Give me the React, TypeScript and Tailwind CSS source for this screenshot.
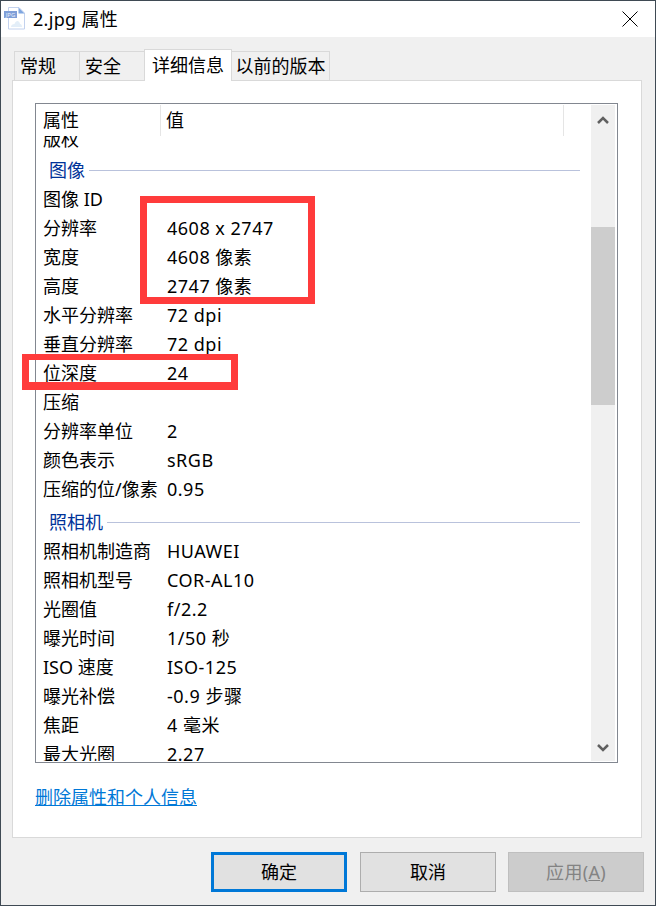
import type { ReactNode } from 'react';

const fontStack = "font-['Segoe_UI','Noto_Sans','Noto_Sans_CJK_SC',sans-serif]";

const topRows = [
  ['图像 ID', ''],
  ['分辨率', '4608 x 2747'],
  ['宽度', '4608 像素'],
  ['高度', '2747 像素'],
  ['水平分辨率', '72 dpi'],
  ['垂直分辨率', '72 dpi'],
  ['位深度', '24'],
  ['压缩', ''],
  ['分辨率单位', '2'],
  ['颜色表示', 'sRGB'],
  ['压缩的位/像素', '0.95'],
];

const cameraRows = [
  ['照相机制造商', 'HUAWEI'],
  ['照相机型号', 'COR-AL10'],
  ['光圈值', 'f/2.2'],
  ['曝光时间', '1/50 秒'],
  ['ISO 速度', 'ISO-125'],
  ['曝光补偿', '-0.9 步骤'],
  ['焦距', '4 毫米'],
  ['最大光圈', '2.27'],
];

function Row({ label, value }: { label: string; value: string }) {
  return (
    <div className="flex h-[29px] shrink-0 items-center pl-[7px] text-[18px] leading-[29px] text-black">
      <span className="w-[124px] shrink-0 whitespace-nowrap">{label}</span>
      <span className="whitespace-nowrap tracking-[0.5px]">{value}</span>
    </div>
  );
}

function Section({ title, className }: { title: string; className?: string }) {
  return (
    <div className={`flex h-[29px] shrink-0 items-center pl-[13px] pr-[11px] text-[18px] text-[#003399] ${className ?? ''}`}>
      <span className="whitespace-nowrap">{title}</span>
      <div className="ml-[4px] h-px flex-1 bg-[#b9c2dc]" />
    </div>
  );
}

function Tab({ children, active, className }: { children: ReactNode; active?: boolean; className: string }) {
  if (active) {
    return (
      <div className={`relative z-10 -mb-px flex h-[32px] items-center justify-center border border-b-0 border-[#d9d9d9] bg-white text-[18px] text-black ${className}`}>
        {children}
      </div>
    );
  }
  return (
    <div className={`flex h-[29px] items-center border border-b-0 border-[#d9d9d9] bg-[#f0f0f0] pt-px text-[18px] text-black ${className}`}>
      {children}
    </div>
  );
}

function FileIcon() {
  return (
    <svg width="24" height="24" viewBox="0 0 24 24" className="ml-[3px] shrink-0">
      <path d="M4.500.5h10.500l5.500 5.500v16h-16z" fill="#ffffff" stroke="#c3d2ee" />
      <path d="M14.500.5v6h6z" fill="#7fa6e0" />
      <rect x="0" y="4" width="13" height="7" fill="#7f9fd8" />
      <text x="6.500" y="10" textAnchor="middle" fontSize="6" fill="#e6eefa">JPG</text>
      <path d="M7 20c0-2 1.500-3 3.500-3 .5-2 2-3 3-3s2.500 1.500 2.500 3c1.500 0 2 1.500 2 3z" fill="#e3eef8" />
    </svg>
  );
}

function Chevron({ down }: { down?: boolean }) {
  return (
    <svg width="12" height="9" viewBox="0 0 12 9">
      <path d={down ? 'M1 2l5 5 5-5' : 'M1 7l5-5 5 5'} fill="none" stroke="#606060" strokeWidth="2.500" />
    </svg>
  );
}

export default function App() {
  return (
    <div className={`relative flex h-[906px] w-[656px] flex-col overflow-hidden border border-[#3f4a54] bg-[#f0f0f0] ${fontStack}`}>
      {/* title bar */}
      <div className="flex h-[36px] shrink-0 items-center bg-white">
        <FileIcon />
        <span className="ml-[5px] text-[18px] tracking-[0.3px] text-black">2.jpg 属性</span>
        <svg width="16" height="16" viewBox="0 0 16 16" className="mb-px ml-auto mr-[17px]">
          <path d="M.5.5l15 15M15.500.5l-15 15" stroke="#000000" strokeWidth="1" fill="none" />
        </svg>
      </div>

      {/* tabs */}
      <div className="mx-[11px] mt-[12px] flex h-[31px] items-end pl-[2px]">
        <Tab className="w-[66px] pl-[5px]">常规</Tab>
        <Tab className="-ml-px w-[66px] pl-[5px]">安全</Tab>
        <Tab active className="-ml-px w-[88px]">详细信息</Tab>
        <Tab className="-ml-px w-[99px] justify-center whitespace-nowrap">以前的版本</Tab>
      </div>

      {/* panel */}
      <div className="mx-[11px] flex h-[758px] w-[630px] flex-col border border-[#d9d9d9] bg-white pl-[22px] pt-[22px]">
        <div className="flex h-[660px] w-[583px] border border-[#828790] pb-px pr-[2px] pt-px">
          <div className="flex min-w-0 flex-1 flex-col">
            <div className="relative z-10 flex h-[31px] shrink-0 bg-white text-[18px] text-black">
              <div className="flex w-[125px] items-center border-r border-[#e5e5e5] pl-[7px]">属性</div>
              <div className="flex w-[403px] items-center border-r border-[#e5e5e5] pl-[5px]">值</div>
            </div>
            <div className="min-h-0 flex-1 overflow-hidden">
              <div className="-mt-[11px] flex flex-col">
                <Row label="版权" value="" />
                <Section title="图像" className="mt-[2px]" />
                {topRows.map(([label, value]) => (
                  <Row key={label} label={label} value={value} />
                ))}
                <Section title="照相机" className="mt-[4px]" />
                {cameraRows.map(([label, value]) => (
                  <Row key={label} label={label} value={value} />
                ))}
              </div>
            </div>
          </div>
          {/* scrollbar */}
          <div className="flex w-[24px] shrink-0 flex-col bg-[#f0f0f0]">
            <div className="flex h-[24px] items-center justify-center pt-[6px]"><Chevron /></div>
            <div className="mt-[98px] h-[178px] bg-[#cdcdcd]" />
            <div className="mt-auto flex h-[24px] items-center justify-center pb-[4px]"><Chevron down /></div>
          </div>
        </div>
        <div className="mt-[23px] text-[18px] leading-[22px] text-[#0078d7] underline">删除属性和个人信息</div>
      </div>

      {/* buttons */}
      <div className="mt-[14px] flex justify-end gap-[12px] pr-[11px]">
        <div className="mr-px flex h-[40px] w-[136px] items-center justify-center border-[3px] border-[#0078d7] bg-[#e1e1e1] text-[18px] text-black">确定</div>
        <div className="flex h-[40px] w-[136px] items-center justify-center border border-[#adadad] bg-[#e1e1e1] text-[18px] text-black">取消</div>
        <div className="flex h-[40px] w-[136px] items-center justify-center border border-[#bfbfbf] bg-[#cccccc] text-[18px] text-[#838383]">
          <span className="tracking-[0.3px]">应用(<span className="underline">A</span>)</span>
        </div>
      </div>

      {/* red annotation boxes */}
      <div className="absolute left-[139px] top-[195px] h-[108px] w-[175px] border-[7px] border-[#ff3b3b]" />
      <div className="absolute left-[21px] top-[353px] h-[36px] w-[216px] border-x-[7px] border-t-[6px] border-b-[8px] border-[#ff3b3b]" />
    </div>
  );
}
